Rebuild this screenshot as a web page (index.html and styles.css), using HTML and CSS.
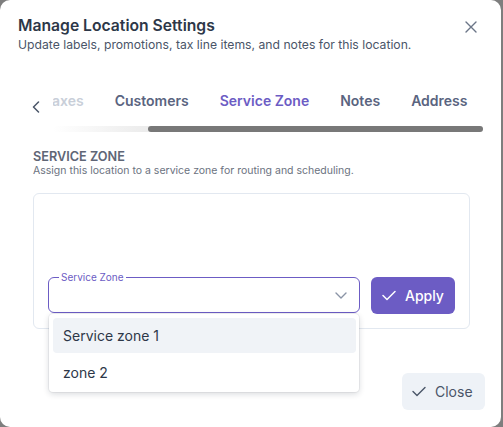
FILE: index.html
```html
<!DOCTYPE html>
<html lang="en">
<head>
<meta charset="utf-8">
<title>Manage Location Settings</title>
<link rel="stylesheet" href="styles.css">
</head>
<body>
<div class="dialog" role="dialog" aria-labelledby="dlg-title">
  <header class="dlg-head">
    <div class="dlg-heading">
      <h2 class="title" id="dlg-title">Manage Location Settings</h2>
      <p class="subtitle">Update labels, promotions, tax line items, and notes for this location.</p>
    </div>
    <button class="icon-btn close-x" aria-label="Close">
      <svg width="12" height="12" viewBox="0 0 12 12"><path d="M1 1L11 11M11 1L1 11" stroke="#6b7587" stroke-width="1.4" stroke-linecap="round" fill="none"/></svg>
    </button>
  </header>

  <div class="tabs">
    <button class="tab-arrow" aria-label="Scroll tabs left">
      <svg width="8" height="12" viewBox="0 0 8 12"><path d="M6.5 1L1.5 6L6.5 11" stroke="#4a5568" stroke-width="1.5" stroke-linecap="round" stroke-linejoin="round" fill="none"/></svg>
    </button>
    <div class="tabs-scroll">
      <div class="tabs-viewport">
        <div class="tabs-row">
          <span class="tab">Labels</span>
          <span class="tab">Promotions</span>
          <span class="tab tab-faded">Taxes</span>
          <span class="tab">Customers</span>
          <span class="tab tab-active">Service Zone</span>
          <span class="tab">Notes</span>
          <span class="tab">Address</span>
        </div>
      </div>
      <div class="scrollbar"><div class="thumb"></div></div>
    </div>
  </div>

  <section class="section">
    <h3 class="section-title">Service Zone</h3>
    <p class="section-desc">Assign this location to a service zone for routing and scheduling.</p>
    <div class="card">
      <div class="zone-row">
        <div class="field">
          <span class="field-label">Service Zone</span>
          <span class="field-value"></span>
          <svg class="field-chevron" width="12" height="7" viewBox="0 0 12 7"><path d="M1 1L6 6L11 1" stroke="#8a94a6" stroke-width="1.4" stroke-linecap="round" stroke-linejoin="round" fill="none"/></svg>
          <ul class="menu" role="listbox">
            <li class="menu-item is-hover">Service zone 1</li>
            <li class="menu-item">zone 2</li>
          </ul>
        </div>
        <button class="btn btn-primary">
          <svg width="14" height="11" viewBox="0 0 14 11"><path d="M1 5.5L5 9.5L13 1.5" stroke="#ffffff" stroke-width="1.5" stroke-linecap="round" stroke-linejoin="round" fill="none"/></svg>
          <span>Apply</span>
        </button>
      </div>
    </div>
  </section>

  <footer class="dlg-foot">
    <button class="btn btn-soft">
      <svg width="14" height="11" viewBox="0 0 14 11"><path d="M1 5.5L5 9.5L13 1.5" stroke="#4a5568" stroke-width="1.4" stroke-linecap="round" stroke-linejoin="round" fill="none"/></svg>
      <span>Close</span>
    </button>
  </footer>
</div>
</body>
</html>
```

FILE: styles.css
```css
* { box-sizing: border-box; }

html, body {
  margin: 0;
  padding: 0;
}

body {
  width: 503px;
  height: 427px;
  background: #7e7e7e;
  font-family: Inter, "Noto Sans", "Liberation Sans", sans-serif;
  overflow: hidden;
}

.dialog {
  width: 501px;
  height: 427px;
  background: #ffffff;
  border-radius: 10px;
  padding: 15px 16px 17px 18px;
  display: flex;
  flex-direction: column;
}

/* Header */
.dlg-head {
  display: flex;
  justify-content: space-between;
  align-items: flex-start;
}

.title {
  margin: 0;
  font-size: 15.7px;
  line-height: 21px;
  font-weight: 600;
  color: #2d3748;
}

.subtitle {
  margin: 0;
  font-size: 12.2px;
  line-height: 18px;
  color: #4a5568;
}

.icon-btn {
  border: 0;
  background: transparent;
  padding: 0;
  cursor: pointer;
  display: flex;
  align-items: center;
  justify-content: center;
}

.close-x {
  width: 24px;
  height: 24px;
  margin-top: 0;
  margin-right: 2px;
}

/* Tabs */
.tabs {
  margin-top: 27px;
  display: flex;
  align-items: center;
}

.tab-arrow {
  width: 35px;
  height: 30px;
  border: 0;
  background: transparent;
  padding: 0;
  display: flex;
  align-items: center;
  justify-content: center;
  flex: none;
}

.tabs-scroll {
  flex: 1;
  min-width: 0;
  margin-right: 2px;
}

.tabs-viewport {
  overflow: hidden;
}

.tabs-row {
  display: flex;
  justify-content: flex-end;
}

.tab {
  flex: none;
  padding: 10px 15.5px;
  font-size: 14px;
  line-height: 20px;
  font-weight: 600;
  color: #5a6480;
  white-space: nowrap;
}

.tab-faded { color: #c9cfd9; }
.tab-active { color: #6c5cc4; }

.scrollbar {
  margin-top: 5px;
  height: 6px;
  border-radius: 3px;
  background: linear-gradient(to right, #ffffff 0, #ececec 90px);
  display: flex;
  justify-content: flex-end;
}

.thumb {
  width: 335px;
  height: 6px;
  border-radius: 3px;
  background: #787878;
}

/* Section */
.section {
  margin-top: 17px;
  padding-left: 15px;
  padding-right: 15px;
}

.section-title {
  margin: 0;
  font-size: 12.7px;
  line-height: 15px;
  font-weight: 600;
  text-transform: uppercase;
  color: #5f6676;
}

.section-desc {
  margin: 0;
  font-size: 10.5px;
  line-height: 14px;
  color: #6b7280;
}

.card {
  margin-top: 15px;
  border: 1px solid #e2e8f0;
  border-radius: 6px;
  padding: 83px 14px 14px 14px;
}

.zone-row {
  display: flex;
  gap: 11px;
  align-items: stretch;
}

.field {
  position: relative;
  flex: 1;
  height: 36px;
  border: 1px solid #6c5cc4;
  border-radius: 6px;
  display: flex;
  align-items: center;
  justify-content: flex-end;
  padding-right: 12px;
}

.field-label {
  position: absolute;
  top: -7px;
  left: 10px;
  padding: 0 2px;
  background: #ffffff;
  font-size: 10px;
  line-height: 12px;
  color: #6c5cc4;
}

.field-value { flex: 1; }

.menu {
  position: absolute;
  top: calc(100% + 2px);
  left: 0;
  right: 0;
  margin: 0;
  list-style: none;
  padding: 4px 3px 4px 4px;
  background: #ffffff;
  border-radius: 4px;
  box-shadow: 0 2px 6px rgba(15, 23, 42, 0.16), 0 0 0 1px rgba(15, 23, 42, 0.05);
  z-index: 2;
}

.menu-item {
  height: 35px;
  padding-left: 10px;
  display: flex;
  align-items: center;
  font-size: 14px;
  color: #2d3748;
  border-radius: 4px;
}

.menu-item + .menu-item { padding-top: 3px; }

.menu-item.is-hover { background: #f0f3f7; }

.btn {
  border: 0;
  border-radius: 6px;
  display: flex;
  align-items: center;
  gap: 9px;
  font-family: inherit;
  font-size: 14px;
  cursor: pointer;
}

.btn-primary {
  width: 84px;
  height: 37px;
  padding: 0 0 0 11px;
  background: #6c5cc4;
  color: #ffffff;
  font-weight: 500;
}

/* Footer */
.dlg-foot {
  margin-top: auto;
  display: flex;
  justify-content: flex-end;
}

.btn-soft {
  width: 83px;
  height: 37px;
  padding: 0 0 0 10px;
  background: #eef2f7;
  color: #4a5568;
}
```
